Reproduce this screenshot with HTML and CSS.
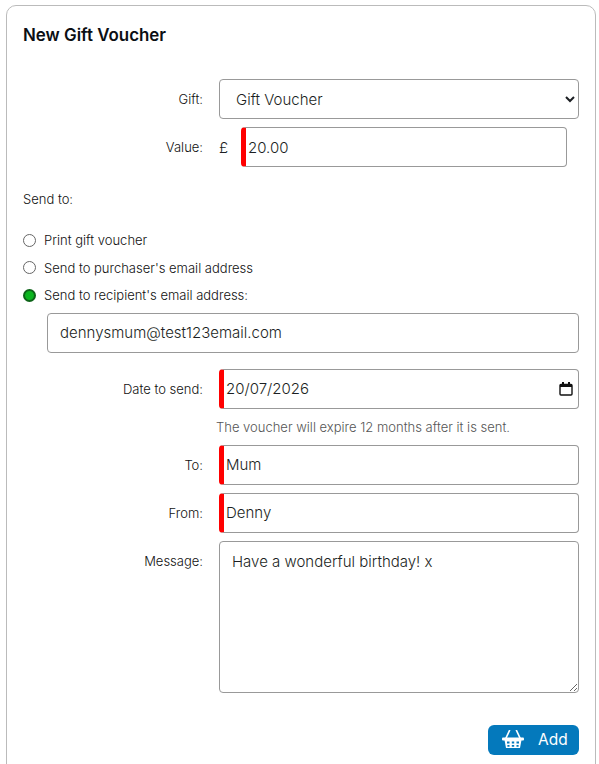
FILE: index.html
```html
<!DOCTYPE html>
<html lang="en-GB">
<head>
<meta charset="utf-8">
<title>New Gift Voucher</title>
<link rel="stylesheet" href="styles.css">
</head>
<body>
<main class="card">
  <h1 class="title">New Gift Voucher</h1>
  <form class="form">
    <div class="row">
      <label class="label" for="gift">Gift:</label>
      <select class="field select" id="gift"><option>Gift Voucher</option></select>
    </div>
    <div class="row">
      <label class="label" for="value">Value:</label>
      <div class="value-wrap">
        <span class="currency">£</span>
        <input class="field required value" id="value" type="text" value="20.00">
      </div>
    </div>
    <p class="send-to">Send to:</p>
    <div class="radios">
      <label class="radio"><input type="radio" name="send"><span>Print gift voucher</span></label>
      <label class="radio"><input type="radio" name="send"><span>Send to purchaser's email address</span></label>
      <label class="radio"><input type="radio" name="send" checked><span>Send to recipient's email address:</span></label>
    </div>
    <input class="field email" type="text" value="dennysmum@test123email.com">
    <div class="row date-row">
      <label class="label" for="date">Date to send:</label>
      <div class="date-wrap">
        <input class="field required date" id="date" type="text" value="20/07/2026">
        <svg class="calendar" viewBox="0 0 14 14" width="14" height="14" aria-hidden="true">
          <path d="M3 0h2v2H3zM9 0h2v2H9z" fill="#111"/>
          <path d="M1 3.500a1 1 0 0 1 1-1h10a1 1 0 0 1 1 1V12a1 1 0 0 1-1 1H2a1 1 0 0 1-1-1z" fill="none" stroke="#111" stroke-width="1.400"/>
          <path d="M1 2h12v3H1z" fill="#111"/>
        </svg>
      </div>
    </div>
    <p class="note">The voucher will expire 12 months after it is sent.</p>
    <div class="row">
      <label class="label" for="to">To:</label>
      <input class="field required" id="to" type="text" value="Mum">
    </div>
    <div class="row">
      <label class="label" for="from">From:</label>
      <input class="field required" id="from" type="text" value="Denny">
    </div>
    <div class="row message-row">
      <label class="label" for="message">Message:</label>
      <textarea class="field message" id="message">Have a wonderful birthday! x</textarea>
    </div>
    <div class="actions">
      <button class="add" type="button">
        <svg class="basket" viewBox="0 0 22 19" width="22" height="19" aria-hidden="true">
          <path d="M7.500.500 4 8M14.500.500 18 8" stroke="#fff" stroke-width="1.700" stroke-linecap="round" fill="none"/>
          <rect x="0" y="7.500" width="22" height="3" rx="1" fill="#fff"/>
          <path d="M2.500 10 4 18h14l1.500-8z" fill="#fff"/>
          <path d="M5 11.500h2.500v2H5zM9.800 11.500h2.400v2H9.800zM14.500 11.500H17v2h-2.500zM5.400 15h2.100v1.700H5.400zM9.800 15h2.400v1.700H9.800zM14.500 15h2.100v1.700h-2.100z" fill="#0479bc"/>
        </svg>
        <span>Add</span>
      </button>
    </div>
  </form>
</main>
</body>
</html>
```
FILE: styles.css
```css
html, body { height: 100%; overflow: hidden; }
body {
  margin: 0;
  padding: 5px 3px 0 6px;
  box-sizing: border-box;
  background: #fff;
  color: #1c1f23;
  font-family: Inter, "Liberation Sans", sans-serif;
  font-size: 13px;
}
.card {
  border: 1px solid #bbb;
  border-radius: 10px;
  padding: 17px 16px 40px;
  height: 900px;
  box-sizing: border-box;
}
.title {
  margin: 0;
  font-size: 16.900px;
  font-weight: 600;
  line-height: 24px;
  color: #0b0f14;
}
.form { margin-top: 32px; display: flex; flex-direction: column; }
.row { display: flex; align-items: center; margin-bottom: 8px; }
.label {
  flex: 0 0 180px;
  margin-right: 16px;
  text-align: right;
  font-size: 13px;
  font-weight: 300;
  color: #111;
}
.field {
  flex: 1;
  min-width: 0;
  height: 40px;
  box-sizing: border-box;
  border: 1px solid #999;
  border-radius: 4px;
  background: #fff;
  color: #1c1f23;
  font-family: inherit;
  font-size: 15px;
  font-weight: 300;
  padding: 0 12px;
  outline: none;
}
.required { border-left: 5px solid #f00; padding-left: 2px; }
.value-wrap { flex: 1; display: flex; align-items: center; }
.currency { width: 22px; font-size: 15px; font-weight: 300; }
.value { flex: 0 0 326px; }
.date-wrap { flex: 1; display: flex; position: relative; }
.calendar { position: absolute; right: 6px; top: 13px; }
.send-to { margin: 8px 0 0; height: 32px; line-height: 32px; font-size: 13px; font-weight: 300; color: #111; }
.radios { margin-top: 15.500px; display: flex; flex-direction: column; gap: 8px; }
.radio { display: flex; align-items: center; gap: 8px; height: 19.500px; font-size: 13px; font-weight: 300; color: #111; }
.radio input {
  appearance: none;
  margin: 0;
  width: 13px;
  height: 13px;
  box-sizing: border-box;
  border: 1px solid #666;
  border-radius: 50%;
  background: #fff;
}
.radio input:checked { background: #0bb51f; border: 2px solid #0d6318; }
.email { flex: none; margin: 7.500px 0 16px 24px; width: calc(100% - 24px); }
.date-row { margin-bottom: 0; }
.note {
  margin: 0 0 0 193px;
  height: 36px;
  box-sizing: border-box;
  padding-top: 1px;
  line-height: 35px;
  font-size: 13px;
  font-weight: 300;
  color: #555;
}
.message-row { align-items: flex-start; }
.message-row .label { padding-top: 12px; }
.message { height: 152px; padding: 10px 12px; line-height: 20px; resize: both; }
.actions { display: flex; justify-content: flex-end; margin-top: 24px; }
.add {
  display: flex;
  align-items: center;
  gap: 14px;
  width: 91px;
  height: 30px;
  box-sizing: border-box;
  padding: 0 0 0 14px;
  border: 0;
  border-radius: 6px;
  background: #0479bc;
  color: #fff;
  font-family: inherit;
  font-size: 15.500px;
  font-weight: 400;
}
.basket { flex: none; }
```
